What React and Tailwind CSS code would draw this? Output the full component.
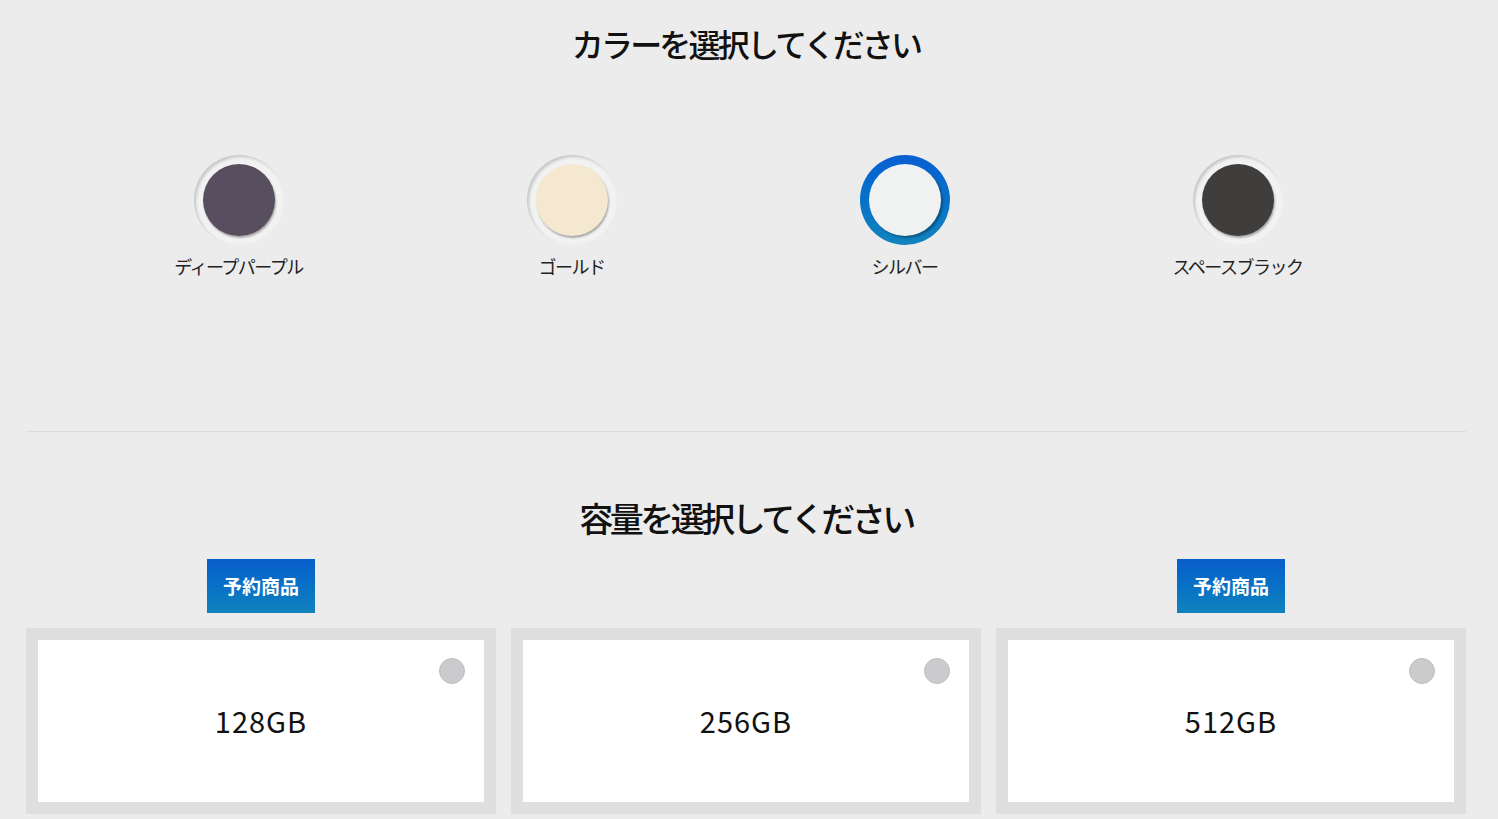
const font = { fontFamily: '"Noto Sans CJK JP", "Noto Sans", sans-serif' };

const colors = [
  { name: "ディープパープル", fill: "bg-[#574e5f]" },
  { name: "ゴールド", fill: "bg-[#f4e8d0]" },
  { name: "シルバー", fill: "bg-[#f0f2f2]", selected: true },
  { name: "スペースブラック", fill: "bg-[#403e3c]" },
];

const sizes = [
  { label: "128GB", preorder: true },
  { label: "256GB", preorder: false },
  { label: "512GB", preorder: true },
];

function Swatch({ name, fill, selected }) {
  return (
    <div className="flex flex-col items-center">
      {selected ? (
        <div className="h-[90px] w-[90px] rounded-full bg-gradient-to-b from-[#0a5ed2] to-[#1283be] flex items-center justify-center">
          <div className={`h-[72px] w-[72px] rounded-full ${fill} shadow-[2px_2px_2px_rgba(0,0,0,0.3)]`} />
        </div>
      ) : (
        <div className="h-[90px] w-[90px] rounded-full bg-[#f2f2f2] shadow-[inset_2px_2px_3px_rgba(0,0,0,0.18)] flex items-center justify-center">
          <div className={`h-[72px] w-[72px] rounded-full ${fill} shadow-[1px_2px_2px_rgba(0,0,0,0.3)]`} />
        </div>
      )}
      <span className="mt-[6px] text-[18px] leading-[30px] text-[#222] tracking-[-1.5px]">{name}</span>
    </div>
  );
}

function SizeCard({ label, preorder }) {
  return (
    <div className="flex flex-col items-center">
      <div className="h-[54px] flex items-start">
        {preorder && (
          <div className="h-[54px] w-[108px] bg-gradient-to-b from-[#0a5dcc] to-[#1282bd] text-white font-bold text-[19px] flex items-center justify-center">
            予約商品
          </div>
        )}
      </div>
      <div className="mt-[15px] w-full border-[12px] border-[#dfdfdf] bg-white h-[186px] relative flex items-center justify-center">
        <div className="absolute right-[19px] top-[18px] h-[26px] w-[26px] rounded-full bg-[#cbcbcd] border border-[#bdbdbd]" />
        <span className="text-[29px] text-[#111] tracking-[1px]">{label}</span>
      </div>
    </div>
  );
}

export default function App() {
  return (
    <div className="min-h-screen bg-[#ececec] px-[26px] overflow-hidden" style={font}>
      <div className="w-[1440px]">
        <h2 className="pt-[20px] text-center text-[32px] leading-[46px] font-medium text-[#111] tracking-[-2.8px]">
          カラーを選択してください
        </h2>
        <div className="mt-[89px] ml-[46px] w-[1332px] grid grid-cols-4">
          {colors.map((c) => (
            <Swatch key={c.name} {...c} />
          ))}
        </div>
        <div className="mt-[150px] h-px bg-[#dcdcdc]" />
        <h2 className="mt-[63px] text-center text-[34px] leading-[46px] font-medium text-[#111] tracking-[-3.5px]">
          容量を選択してください
        </h2>
        <div className="mt-[18px] grid grid-cols-3 gap-[15px]">
          {sizes.map((s) => (
            <SizeCard key={s.label} {...s} />
          ))}
        </div>
      </div>
    </div>
  );
}
